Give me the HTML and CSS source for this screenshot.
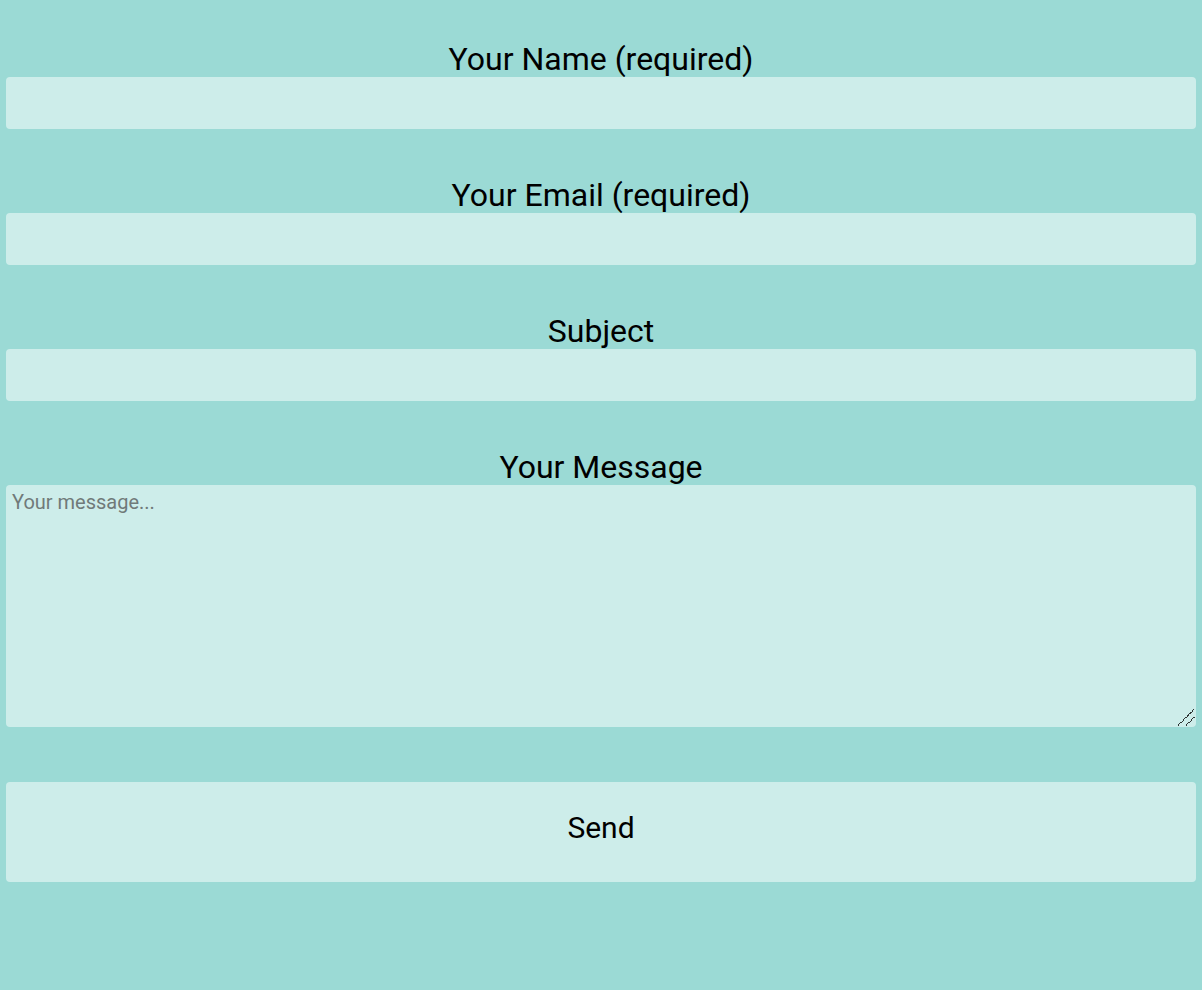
FILE: index.html
```html
<!DOCTYPE html>
<html>
<head>
<meta charset="utf-8">
<link rel="stylesheet" href="styles.css">
</head>
<body>
<form class="contact">
  <div class="field">
    <label class="label">Your Name (required)</label>
    <input class="input" type="text">
  </div>
  <div class="field">
    <label class="label">Your Email (required)</label>
    <input class="input" type="email">
  </div>
  <div class="field">
    <label class="label">Subject</label>
    <input class="input" type="text">
  </div>
  <div class="field">
    <label class="label">Your Message</label>
    <div class="area-wrap">
      <textarea class="textarea" placeholder="Your message..."></textarea>
      <svg class="grip" width="18" height="18" viewBox="0 0 18 18" aria-hidden="true">
        <path d="M1 17.5 L17.5 1 M9 17.5 L17.5 9" stroke="#2f3635" stroke-width="1" stroke-dasharray="1.2 0.6" fill="none" shape-rendering="crispEdges"/>
      </svg>
    </div>
  </div>
  <button class="send" type="button">Send</button>
</form>
</body>
</html>
```
FILE: styles.css
```css
html, body {
  margin: 0;
  background: #9bdad5;
  font-family: Roboto, "Liberation Sans", sans-serif;
}
.contact {
  padding: 42px 6px 0;
  display: flex;
  flex-direction: column;
}
.field {
  display: flex;
  flex-direction: column;
  margin-bottom: 49px;
}
.label {
  text-align: center;
  font-size: 32px;
  line-height: 35px;
  color: #000;
}
.input, .textarea, .send {
  box-sizing: border-box;
  width: 100%;
  border: none;
  border-radius: 4px;
  background: #cdedea;
  font-family: Roboto, "Liberation Sans", sans-serif;
  outline: none;
}
.input {
  height: 52px;
}
.area-wrap {
  position: relative;
  display: flex;
  margin-bottom: 6px;
}
.textarea {
  height: 242px;
  padding: 5px 6px 6px;
  font-size: 20px;
  resize: none;
}
.textarea::placeholder {
  color: #707a79;
}
.grip {
  position: absolute;
  right: 1px;
  bottom: 1px;
  pointer-events: none;
}
.send {
  height: 100px;
  padding: 0 0 9px;
  font-size: 30px;
  color: #000;
}
```
